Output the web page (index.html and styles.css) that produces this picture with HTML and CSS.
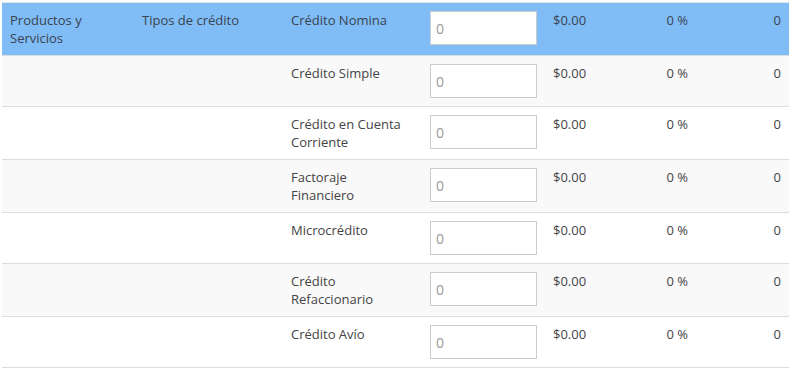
FILE: index.html
```html
<!DOCTYPE html>
<html lang="es">
<head>
  <meta charset="UTF-8" />
  <meta name="viewport" content="width=device-width, initial-scale=1.0"/>
  <title>Productos y Servicios</title>
  <link rel="stylesheet" href="styles.css">
</head>
<body>

<table class="creditos">
  <colgroup>
    <col class="creditos__col--producto">
    <col class="creditos__col--tipo">
    <col class="creditos__col--nombre">
    <col class="creditos__col--monto">
    <col class="creditos__col--total">
    <col class="creditos__col--tasa">
    <col class="creditos__col--plazo">
  </colgroup>
  <tbody>
    <tr class="creditos__row creditos__row--activa">
      <td>Productos y Servicios</td>
      <td>Tipos de crédito</td>
      <td class="creditos__nombre">Crédito Nomina</td>
      <td><input class="creditos__input" type="text" placeholder="0"></td>
      <td>$0.00</td>
      <td class="creditos__num">0 %</td>
      <td class="creditos__num">0</td>
    </tr>
    <tr class="creditos__row">
      <td></td>
      <td></td>
      <td class="creditos__nombre">Crédito Simple</td>
      <td><input class="creditos__input" type="text" placeholder="0"></td>
      <td>$0.00</td>
      <td class="creditos__num">0 %</td>
      <td class="creditos__num">0</td>
    </tr>
    <tr class="creditos__row">
      <td></td>
      <td></td>
      <td class="creditos__nombre">Crédito en Cuenta Corriente</td>
      <td><input class="creditos__input" type="text" placeholder="0"></td>
      <td>$0.00</td>
      <td class="creditos__num">0 %</td>
      <td class="creditos__num">0</td>
    </tr>
    <tr class="creditos__row">
      <td></td>
      <td></td>
      <td class="creditos__nombre">Factoraje Financiero</td>
      <td><input class="creditos__input" type="text" placeholder="0"></td>
      <td>$0.00</td>
      <td class="creditos__num">0 %</td>
      <td class="creditos__num">0</td>
    </tr>
    <tr class="creditos__row">
      <td></td>
      <td></td>
      <td class="creditos__nombre">Microcrédito</td>
      <td><input class="creditos__input" type="text" placeholder="0"></td>
      <td>$0.00</td>
      <td class="creditos__num">0 %</td>
      <td class="creditos__num">0</td>
    </tr>
    <tr class="creditos__row">
      <td></td>
      <td></td>
      <td class="creditos__nombre">Crédito Refaccionario</td>
      <td><input class="creditos__input" type="text" placeholder="0"></td>
      <td>$0.00</td>
      <td class="creditos__num">0 %</td>
      <td class="creditos__num">0</td>
    </tr>
    <tr class="creditos__row">
      <td></td>
      <td></td>
      <td class="creditos__nombre">Crédito Avío</td>
      <td><input class="creditos__input" type="text" placeholder="0"></td>
      <td>$0.00</td>
      <td class="creditos__num">0 %</td>
      <td class="creditos__num">0</td>
    </tr>
  </tbody>
</table>

</body>
</html>
```

FILE: styles.css
```css
* {
  box-sizing: border-box;
}
body {
  font-family: 'Open Sans', sans-serif;
  font-size: 13px;
  line-height: 18px;
  color: #444;
  background: #fff;
  margin: 0;
  padding: 2px 2px 0;
}

.creditos {
  width: 787px;
  table-layout: fixed;
  border-collapse: collapse;
  border-spacing: 0;
  border-top: 1px solid #e4e4e4;
}
.creditos__col--producto { width: 132px; }
.creditos__col--tipo { width: 149px; }
.creditos__col--nombre { width: 139px; }
.creditos__col--monto { width: 123px; }
.creditos__col--total { width: 75px; }
.creditos__col--tasa { width: 76px; }
.creditos__col--plazo { width: 93px; }

.creditos td {
  padding: 8px;
  vertical-align: top;
  border-top: 1px solid #ddd;
}
.creditos td.creditos__nombre {
  padding-right: 14px;
}
.creditos__row:nth-child(even) {
  background: #f9f9f9;
}
.creditos__row:last-child td {
  border-bottom: 1px solid #ddd;
}
.creditos__row--activa {
  background: #80bdf6;
  color: #3a4350;
}
.creditos__row--activa td {
  border-top: none;
}
.creditos__num {
  text-align: right;
}

.creditos__input {
  display: block;
  width: 107px;
  height: 34px;
  padding: 4px 5px;
  font-family: inherit;
  font-size: 14px;
  color: #555;
  background: #fff;
  border: 1px solid #ccc;
  border-radius: 0;
}
.creditos__input::placeholder {
  color: #999;
}
```
